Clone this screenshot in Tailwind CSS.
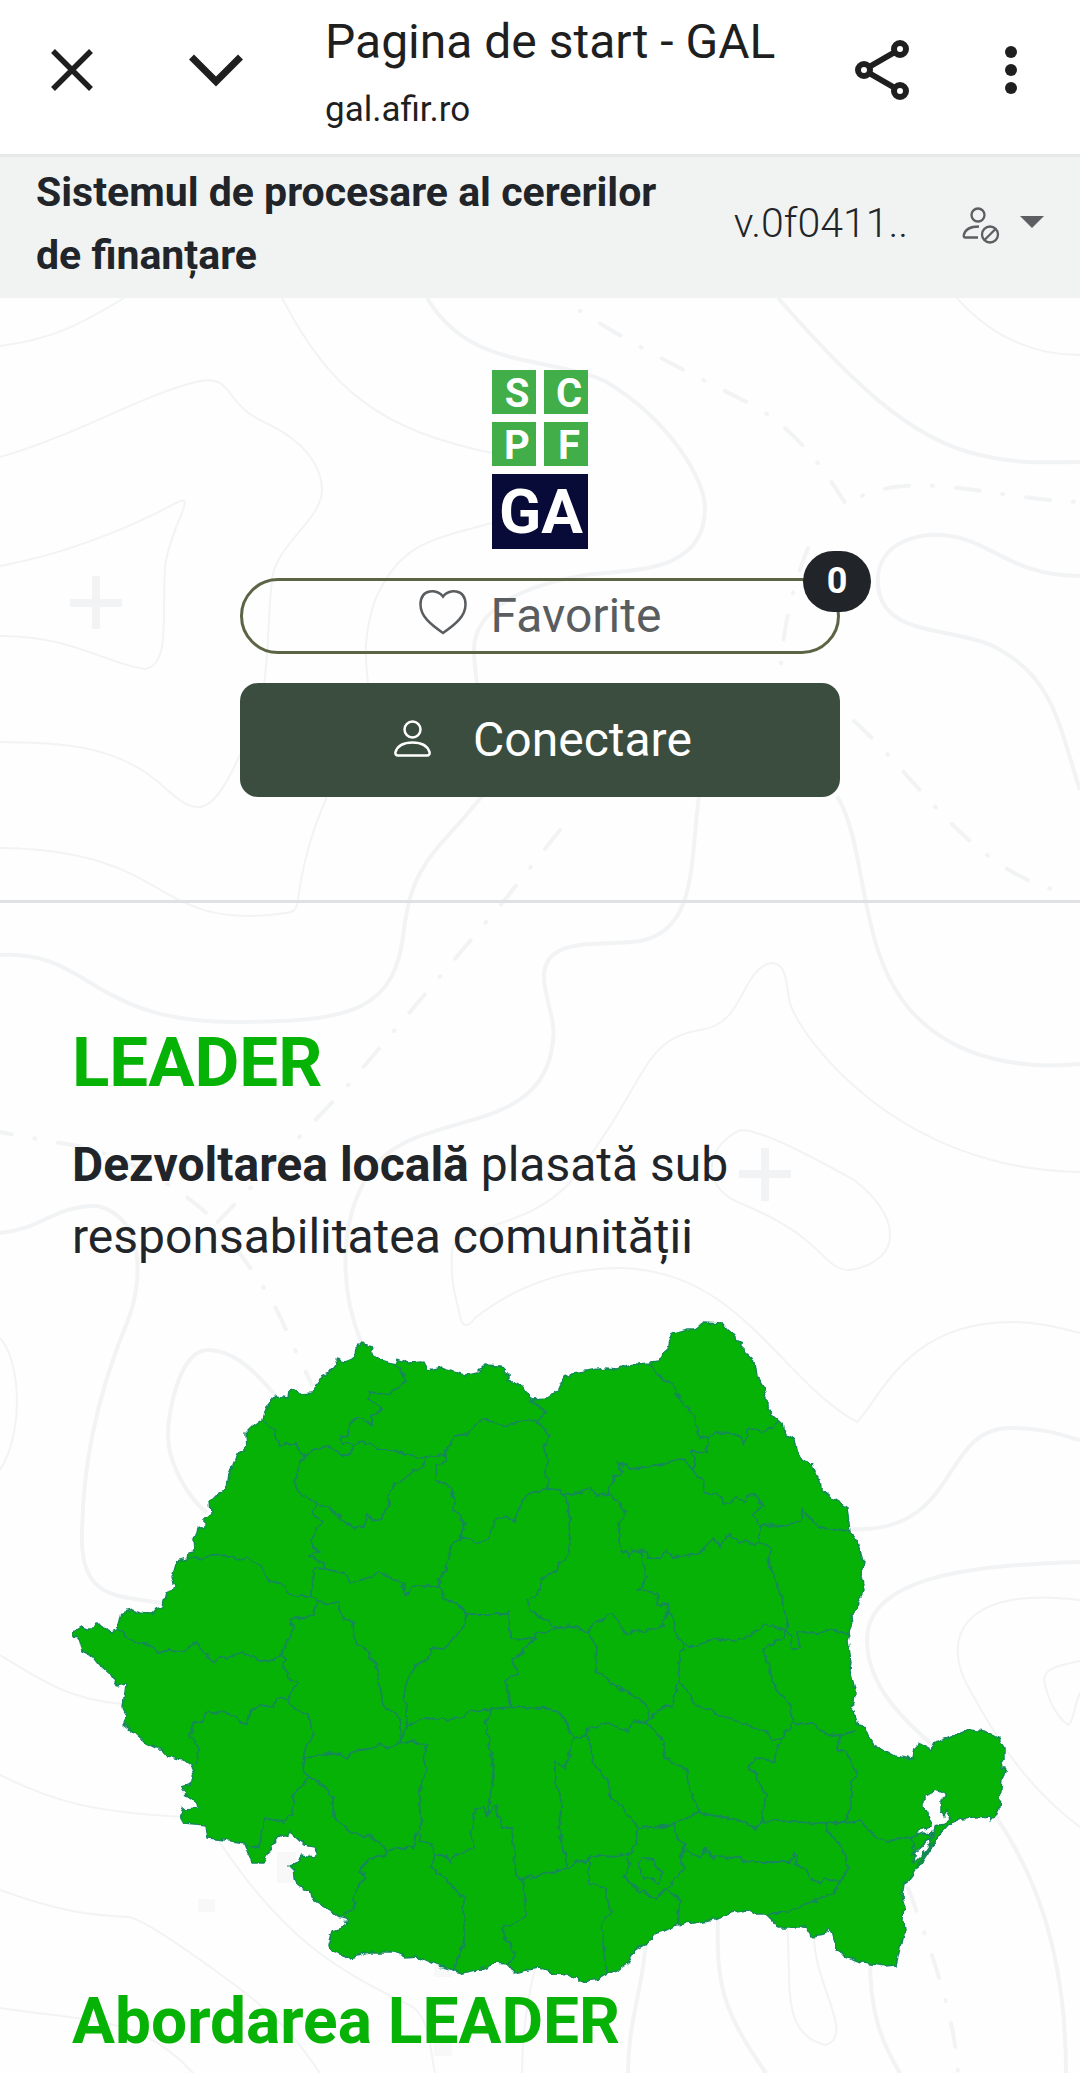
<!DOCTYPE html>
<html lang="ro">
<head>
    <meta charset="UTF-8">
    <meta name="viewport" content="width=device-width, initial-scale=1.0">
    <title>Pagina de start - GAL</title>
    <script src="https://cdn.jsdelivr.net/npm/@tailwindcss/browser@4"></script>
</head>
<body class="min-h-screen flex flex-col bg-[#fefefe] text-[#212529] font-['Roboto',sans-serif]">

    <!-- Browser bar -->
    <header class="flex items-center h-[157px] pl-[48px] pr-[27px] pb-[15px] border-b-3 border-[#e6e9e8] bg-white text-[#1f1f1f]">
        <button type="button" aria-label="Închide" class="shrink-0">
            <svg class="w-12 h-12" viewBox="0 0 48 48" fill="none" stroke="currentColor" stroke-width="5.500"><path d="M5 5 43 43M43 5 5 43"/></svg>
        </button>
        <button type="button" aria-label="Minimizează" class="shrink-0 ml-[90px]">
            <svg class="w-15 h-12" viewBox="0 0 60 48" fill="none" stroke="currentColor" stroke-width="7"><path d="M5.500 11 30 35.500 54.500 11"/></svg>
        </button>
        <div class="ml-[79px] mt-3 flex-1 min-w-0">
            <div class="text-[48px] leading-[60px] whitespace-nowrap">Pagina de start - GAL</div>
            <div class="mt-2 text-[35px] leading-[60px]">gal.afir.ro</div>
        </div>
        <button type="button" aria-label="Distribuie" class="shrink-0">
            <svg class="w-14 h-15" viewBox="0 0 56 60" fill="none" stroke="currentColor" stroke-width="6"><circle cx="10" cy="30" r="6"/><circle cx="46" cy="9" r="6"/><circle cx="46" cy="51" r="6"/><path d="M15 27 41 12M15 33 41 48"/></svg>
        </button>
        <button type="button" aria-label="Meniu" class="shrink-0 ml-[83px]">
            <svg class="w-15 h-12" viewBox="0 0 60 48" fill="currentColor"><circle cx="18" cy="6" r="6"/><circle cx="18" cy="24" r="6"/><circle cx="18" cy="42" r="6"/></svg>
        </button>
    </header>

    <!-- App bar -->
    <nav class="flex items-center h-[141px] pl-9 pr-9 pb-2 bg-[#f0f3f2]">
        <a href="#" class="flex-1 text-[41px] leading-[63px] font-bold">Sistemul de procesare al cererilor<br>de finanțare</a>
        <span class="text-[41px] leading-[63px] font-light">v.0f0411..</span>
        <button type="button" aria-label="Utilizator" class="flex items-center gap-5 ml-[54px] mt-1 text-[#5c5f62]">
            <svg class="w-[38px] h-[38px]" viewBox="0 0 38 38" fill="none" stroke="currentColor" stroke-width="2.3"><circle cx="16" cy="8" r="6.5"/><path d="M16 30.500H3.500C2 30.500 1.500 29.500 1.800 28 3 22.500 9 19.500 17 19.500"/><circle cx="28" cy="27.500" r="8"/><path d="M22.500 33 33.500 22"/></svg>
            <svg class="w-6 h-3 mb-2" viewBox="0 0 24 12" fill="currentColor"><path d="M0 0H24L12 12z"/></svg>
        </button>
    </nav>

    <main class="relative flex-1 overflow-hidden">
        <!-- Topographic background -->
        <svg class="absolute inset-0 w-full h-full" viewBox="0 298 1080 1775" preserveAspectRatio="xMidYMin slice" fill="none" stroke="#f2f3f4" aria-hidden="true">
            <g stroke-width="4">
                <path d="M427 298C470 370 545 355 605 381C670 420 705 480 705 508C705 570 640 570 592 574C520 585 474 610 474 650C474 700 500 760 482 796C440 850 412 860 404 930C395 1010 355 1022 234 1022C90 1022 90 950 0 955"/>
                <path d="M778 298C850 380 910 440 980 455C1020 465 1050 462 1080 462"/>
                <path d="M1080 576C1000 575 990 532 928 535C890 540 876 560 878 585C882 640 960 625 1000 650C1055 680 1060 730 1080 790"/>
                <path d="M699 796C690 860 698 930 640 941C600 947 543 935 544 978C545 1000 556 1020 553 1040C545 1135 430 1110 380 1160C335 1210 340 1290 361 1342"/>
                <path d="M837 796C870 850 855 960 920 1020C960 1058 1020 1070 1080 1064"/>
                <path d="M0 1233C40 1230 55 1205 98 1206C150 1220 140 1290 128 1320C95 1400 82 1470 82 1540C82 1600 120 1596 163 1603"/>
                <path d="M275 1395C250 1365 230 1350 208 1350C180 1350 168 1410 168 1436C168 1460 185 1495 207 1513"/>
                <path d="M850 1529C960 1535 940 1428 1010 1428C1050 1428 1065 1437 1080 1440"/>
                <path d="M1080 1562C960 1565 867 1580 867 1640C867 1700 930 1740 960 1770C1040 1860 1066 1960 1066 2073"/>
                <path d="M718 1915C716 1985 722 2010 766 2073M870 1960C870 2010 880 2040 900 2073M646 1940C643 1990 628 2020 628 2073"/>
            </g>
            <g stroke-width="2">
                <path d="M124 298C80 325 50 340 0 346M282 298C330 390 380 430 492 453M957 298C990 335 1030 355 1080 355"/>
                <path d="M0 457C83 433 140 395 200 381C235 375 222 405 270 425C303 441 322 465 322 490C322 520 275 545 272 580C264 650 275 690 238 759C210 820 195 815 165 788C120 745 60 742 0 742"/>
                <path d="M0 566C60 555 124 531 176 503C200 490 168 530 165 568C162 620 170 665 145 669C110 665 69 635 0 636"/>
                <path d="M492 523C430 540 400 543 375 600C362 640 366 660 368 684C360 750 310 800 298 900C296 915 290 912 269 915C150 925 170 850 0 848"/>
                <path d="M1080 1172C900 1170 800 1040 789 1000C786 970 782 963 771 963C740 970 745 1025 700 1030C640 1040 650 1080 572 1180C530 1230 455 1225 452 1250C450 1290 459 1305 460 1317C463 1330 470 1325 475 1318C510 1290 560 1268 620 1268C740 1270 780 1380 857 1422C880 1400 905 1322 1012 1322C1040 1322 1060 1328 1080 1333"/>
                <path d="M740 1130C700 1150 705 1190 740 1203C830 1240 820 1270 851 1270C905 1260 900 1215 854 1180C800 1150 760 1130 740 1130z"/>
                <path d="M0 1338C20 1360 25 1430 0 1470M0 1655C40 1680 70 1700 123 1704M0 1775C60 1805 100 1812 182 1817"/>
                <path d="M0 1890C60 1912 90 1915 128 1917C145 1917 250 1995 260 2005C290 2030 300 2045 320 2073M0 2008C90 2022 140 2015 193 2073"/>
                <path d="M217 1838C290 1950 350 1975 413 2007C430 2020 430 2050 435 2073M535 1968C525 2010 522 2040 522 2073"/>
                <path d="M787 1925C792 1985 780 2035 826 2045C855 2035 814 1985 814 1935"/>
                <path d="M1080 1600C960 1585 940 1640 970 1690C1000 1745 1030 1790 1080 1827M1080 1661C1060 1665 1044 1668 1044 1680C1048 1700 1055 1715 1068 1725C1074 1722 1074 1705 1080 1693"/>
            </g>
            <g stroke-width="4" stroke-linecap="round" stroke-dasharray="24 23 1 23">
                <path stroke-dashoffset="46" d="M579 310C640 350 689 372 758 408C800 435 825 470 847 506L862 496C920 470 1000 500 1080 502" />
                <path d="M808 548C795 580 784 620 781 665M854 721C920 780 970 870 1062 892M560 830 503 902 344 1090 213 1227"/>
                <path d="M-12 1130 83 1147C150 1165 200 1205 213 1220C250 1265 275 1300 289 1337L312 1385M908 1888C935 1960 955 2020 958 2073"/>
            </g>
            <g stroke-width="8"><path d="M96 576V629M70 603H122M765 1148V1201M739 1174H791"/></g>
            <path fill="#f8f8f9" stroke="none" d="M198 1899h17v13h-17zM277 1852h19v31h-19zM434 1960h18v17h-18zM434 2042h18v14h-18z"/>
        </svg>

        <section class="relative flex flex-col items-center pt-[72px] h-[605px] border-b-3 border-[#dfe1e5]">
            <!-- Logo -->
            <div class="grid grid-cols-2 gap-2 w-24 text-white font-bold text-center">
                <div class="h-11 pl-1.5 bg-[#41ae49] text-[40px] leading-[48px]">S</div>
                <div class="h-11 pl-1.5 bg-[#41ae49] text-[40px] leading-[48px]">C</div>
                <div class="h-11 pl-1.5 bg-[#41ae49] text-[40px] leading-[48px]">P</div>
                <div class="h-11 pl-1.5 bg-[#41ae49] text-[40px] leading-[48px]">F</div>
                <div class="col-span-2 h-[75px] pl-0.5 bg-[#080b38] text-[62px] leading-[76px]">GA</div>
            </div>

            <button type="button" class="relative mt-[29px] w-5/9 h-[76px] flex items-center justify-center gap-6 rounded-full border-3 border-[#5b6545] text-[48px] text-[#5a5d60]">
                <svg class="w-12 h-[46px] -mt-2" viewBox="0 0 48 46" fill="none" stroke="currentColor" stroke-width="2.5"><path d="M24 7.500C19 0 1.500-1 1.500 15.500C1.500 27 11 35 24 44C37 35 46.500 27 46.500 15.500C46.500-1 29 0 24 7.500z"/></svg>
                Favorite
                <span class="absolute -top-[30px] -right-[34px] w-[68px] h-[61px] rounded-full bg-[#212529] text-white text-[36px] leading-[60px] font-bold">0</span>
            </button>

            <button type="button" class="mt-[29px] w-5/9 h-[114px] pl-1.5 flex items-center justify-center gap-[42px] rounded-[18px] bg-[#3b4d3f] text-[48px] text-white">
                <svg class="w-[37px] h-[37px] -mt-1" viewBox="0 0 37 37" fill="none" stroke="currentColor" stroke-width="2.500"><circle cx="18.500" cy="9.500" r="8"/><path d="M4 35.500H33C35 35.500 36 34 35.500 32C33.500 26 27 22.500 18.500 22.500S3.500 26 1.500 32C1 34 2 35.500 4 35.500z"/></svg>
                Conectare
            </button>
        </section>

        <section class="relative px-[72px] pt-[119px]">
            <h2 class="text-[69px] leading-[82px] font-bold text-[#07b207]">LEADER</h2>
            <p class="mt-[25px] text-[48px] leading-[72px]"><b>Dezvoltarea locală</b> plasată sub<br>responsabilitatea comunității</p>

            <!-- County map -->
            <svg class="block w-full mt-[46px]" viewBox="72 1318 936 664" stroke="#15885a" stroke-linejoin="round" role="img" aria-label="Harta României">
                <defs>
                    <filter id="rough" x="-2%" y="-2%" width="104%" height="104%" color-interpolation-filters="sRGB">
                        <feTurbulence type="fractalNoise" baseFrequency="0.12" numOctaves="2" seed="4"/>
                        <feDisplacementMap in="SourceGraphic" scale="7" xChannelSelector="R" yChannelSelector="G"/>
                    </filter>
                </defs>
                <g filter="url(#rough)">
                <path fill="#07b207" fill-rule="evenodd" stroke-width="1.500" d="M72 1632 82 1626 87 1628 93 1628 96 1622 103 1626 111 1630 117 1628 119 1621 121 1612 132 1609 140 1612 152 1613 157 1607 163 1605 166 1592 173 1590 175 1585 172 1577 177 1560 187 1557 188 1551 195 1550 194 1538 198 1528 205 1525 205 1517 211 1512 210 1500 217 1493 223 1489 229 1480 230 1472 235 1460 239 1452 246 1450 245 1433 252 1426 263 1418 267 1405 276 1395 287 1397 288 1389 293 1388 300 1393 312 1392 316 1384 320 1382 319 1377 330 1372 337 1363 336 1358 345 1361 353 1358 355 1348 361 1342 371 1346 373 1353 383 1360 394 1363 396 1358 407 1362 420 1361 426 1363 428 1369 442 1366 453 1370 465 1374 478 1371 485 1364 500 1365 509 1375 509 1380 523 1386 531 1399 547 1398 557 1391 564 1376 573 1372 605 1367 618 1368 627 1364 650 1362 659 1361 662 1353 668 1348 670 1340 673 1332 687 1328 695 1328 703 1322 722 1323 727 1329 734 1332 737 1339 743 1342 743 1350 755 1361 757 1375 763 1385 767 1398 767 1405 773 1415 782 1423 786 1433 795 1438 797 1450 803 1461 813 1464 819 1480 820 1487 833 1498 847 1507 850 1530 857 1540 863 1560 861 1577 864 1588 858 1600 857 1608 851 1613 852 1625 848 1640 851 1660 850 1670 855 1690 854 1702 850 1705 854 1710 857 1723 866 1728 872 1743 894 1755 912 1758 914 1747 918 1743 931 1750 933 1743 955 1734 970 1728 985 1730 998 1737 1004 1748 1004 1760 1001 1762 1002 1767 1006 1767 1002 1780 999 1807 996 1814 990 1820 990 1816 962 1818 949 1823 938 1835 929 1850 918 1867 908 1880 903 1883 901 1893 904 1903 903 1920 904 1930 900 1947 896 1964 885 1965 863 1962 846 1955 837 1950 833 1933 830 1928 824 1933 811 1935 805 1925 800 1927 779 1927 774 1920 767 1913 755 1913 746 1909 729 1912 715 1918 692 1922 676 1924 663 1930 654 1933 646 1943 635 1950 628 1962 617 1970 607 1972 598 1977 581 1981 568 1973 554 1972 539 1967 528 1969 515 1972 508 1963 493 1962 480 1968 462 1972 450 1968 433 1963 417 1956 405 1957 393 1951 370 1951 350 1957 332 1951 328 1945 332 1930 345 1926 347 1917 338 1915 327 1907 312 1898 310 1889 300 1887 296 1880 294 1869 290 1865 298 1862 301 1854 313 1856 318 1852 313 1845 303 1843 290 1831 278 1837 272 1845 263 1862 253 1862 248 1852 244 1842 225 1839 207 1837 205 1824 185 1822 180 1813 182 1808 199 1807 198 1802 188 1795 181 1787 190 1784 192 1775 196 1769 183 1759 167 1755 162 1748 157 1748 145 1742 132 1730 123 1723 127 1715 123 1707 126 1683 117 1685 110 1673 100 1664 93 1655 82 1650 80 1642zM937 1789 946 1793 946 1797 941 1798 941 1810 944 1815 947 1810 950 1816 944 1823 936 1825 935 1832 916 1835 918 1829 931 1826 931 1820 924 1807 924 1797 929 1793zM931 1838 924 1842 916 1848 914 1862 924 1852 931 1842z"/>
                <g fill="none" stroke-width="1.800">
                    <path d="M263 1418 272 1428 280 1443 295 1443 304 1456 315 1447 332 1446 340 1453 350 1453 354 1443 362 1441 383 1448 407 1452 417 1457 427 1455 445 1453 454 1435 467 1433 481 1418 507 1425 525 1420 537 1419 547 1412 531 1399"/>
                    <path d="M354 1443 342 1443 341 1436 348 1435 349 1424 357 1416 372 1425 372 1414 382 1407 368 1398 370 1391 388 1394 407 1380 400 1368 394 1363"/>
                    <path d="M304 1456 298 1462 298 1472 294 1480 300 1493 317 1502 330 1506 335 1514 347 1521 353 1527 363 1525 367 1513 373 1520 382 1517 390 1503 388 1493 395 1482 403 1480 412 1470 423 1467 427 1455"/>
                    <path d="M317 1502 312 1512 321 1521 311 1537 318 1552 309 1555 325 1562 325 1568 315 1567 312 1583 312 1595 318 1600"/>
                    <path d="M188 1556 200 1558 210 1555 233 1554 237 1560 247 1557 260 1563 267 1579 280 1582 292 1595 312 1595M325 1568 345 1572 350 1583 380 1572 403 1582 403 1592 410 1592 412 1585 440 1586"/>
                    <path d="M445 1453 445 1460 437 1463 436 1477 450 1487 455 1497 454 1510 465 1522 462 1536 450 1545 449 1560 440 1577 440 1586 445 1598 457 1603 466 1615 463 1627 443 1648 430 1647 428 1658 417 1663 408 1678 403 1693 407 1710 407 1725 402 1740"/>
                    <path d="M117 1628 137 1642 152 1644 158 1652 167 1650 183 1651 196 1640 200 1647 212 1661 223 1657 243 1651 260 1660 273 1659 280 1653"/>
                    <path d="M318 1600 311 1615 290 1618 293 1628 287 1643 280 1653 286 1658 283 1667 292 1680 297 1682 288 1697 295 1709 307 1712 314 1732 304 1750 304 1757"/>
                    <path d="M318 1600 337 1603 342 1615 352 1622 353 1640 365 1647 375 1663 378 1680 383 1705 400 1718 402 1740"/>
                    <path d="M196 1763 199 1750 190 1734 193 1722 202 1720 207 1710 237 1715 240 1722 248 1722 250 1710 261 1703 273 1707 277 1698 288 1697"/>
                    <path d="M304 1757 327 1752 340 1753 347 1758 353 1750 368 1748 380 1743 388 1748 402 1740 417 1742 427 1745 423 1757 427 1768 419 1792 421 1830"/>
                    <path d="M304 1757 302 1768 310 1776 325 1785 333 1795 333 1815 352 1832 370 1835 388 1850M310 1776 294 1793 292 1812 284 1822 267 1817 262 1825 260 1847 244 1843"/>
                    <path d="M388 1850 397 1847 413 1847 417 1830 421 1840 432 1843 435 1855 445 1855 450 1861 458 1852 474 1848 471 1832 475 1808 483 1805 488 1815 496 1805 503 1827 512 1827 516 1875 523 1877 548 1872 568 1868"/>
                    <path d="M388 1850 385 1855 370 1857 360 1870 366 1877 355 1887 353 1908 342 1914M435 1855 431 1865 447 1880 464 1898 464 1943 455 1962 454 1970"/>
                    <path d="M492 1709 486 1722 492 1760 493 1772 488 1815M523 1875 526 1915 501 1928 515 1953 508 1963"/>
                    <path d="M407 1725 425 1717 453 1719 473 1710 510 1706 548 1707 565 1718 572 1737 568 1760 565 1767 555 1760 555 1783 561 1793 559 1827 568 1868"/>
                    <path d="M510 1706 506 1680 519 1672 512 1660 522 1650 535 1638 536 1633 558 1627M463 1627 467 1613 507 1613 509 1610 510 1637 535 1638M457 1603 467 1613"/>
                    <path d="M450 1545 462 1535 475 1542 487 1539 495 1520 505 1515 514 1520 522 1500 530 1492 548 1488 560 1489 565 1493 580 1492 588 1487 597 1494 608 1493"/>
                    <path d="M537 1419 549 1435 543 1445 548 1460 546 1470 548 1488M565 1493 569 1513 570 1552 557 1567 542 1578 538 1593 527 1597 530 1610 558 1627 573 1625 587 1632"/>
                    <path d="M650 1363 660 1376 672 1383 680 1398 694 1413 699 1438 708 1437 707 1453 690 1450 697 1463 692 1468M708 1437 715 1431 738 1434 744 1442 749 1427 763 1430 780 1422"/>
                    <path d="M692 1468 681 1457 663 1464 630 1468 618 1460 623 1470 613 1477 608 1493 617 1500 626 1512 618 1522 621 1547 630 1556 632 1549 647 1550 648 1557 660 1557 667 1549 673 1557 698 1553 713 1538 720 1545 728 1532 737 1541 760 1542"/>
                    <path d="M692 1468 702 1480 704 1493 717 1493 725 1502 738 1497 743 1500 746 1495 756 1494 763 1505 752 1513 760 1524 760 1542 770 1548 767 1560 780 1587 788 1628"/>
                    <path d="M760 1524 783 1525 802 1520 803 1508 813 1522 832 1530 850 1529"/>
                    <path d="M640 1550 647 1577 639 1588 658 1593 657 1605 668 1603 667 1613 663 1625 643 1630 625 1632 612 1611 593 1623 587 1632 597 1645 596 1662 597 1670 611 1682 639 1697 650 1710 647 1722"/>
                    <path d="M667 1613 673 1617 677 1635 684 1643 678 1663 679 1680 672 1705 661 1707 650 1719M684 1643 695 1645 713 1638 733 1640 752 1633 765 1622 788 1630 793 1647 799 1647 798 1630 817 1633 827 1628 850 1633"/>
                    <path d="M788 1630 782 1637 763 1648 773 1680 777 1690 790 1703 793 1722M679 1680 694 1702 722 1715 744 1723 765 1730 772 1738 781 1737"/>
                    <path d="M793 1722 781 1737 774 1760 755 1757 748 1767 757 1775 766 1793 761 1823M793 1722 814 1723 826 1733 840 1734 857 1730M840 1734 839 1748 850 1757 857 1772 851 1783 851 1807 844 1822"/>
                    <path d="M585 1728 607 1722 628 1730 633 1719 647 1722 663 1740 665 1757 685 1767 690 1790 700 1812"/>
                    <path d="M572 1737 585 1735 587 1728 589 1743 595 1763 609 1783 610 1796 620 1803 638 1827 637 1843 628 1855 592 1854 588 1860 578 1859 568 1868"/>
                    <path d="M638 1827 663 1825 674 1823 700 1812 733 1818 755 1827 761 1823 772 1819 781 1821 844 1822 861 1820 870 1832 887 1840 911 1837"/>
                    <path d="M674 1823 678 1837 684 1843 681 1860 685 1867 666 1888 655 1897 639 1890 624 1875 631 1863 628 1855M644 1857 654 1858 655 1866 664 1870 658 1883 639 1872 639 1862z"/>
                    <path d="M685 1850 700 1857 706 1847 711 1856 740 1857 748 1861 790 1861 795 1852 797 1863 818 1882 826 1878 840 1881"/>
                    <path d="M826 1822 827 1830 840 1842 849 1868 840 1881 833 1893 811 1901 785 1912 767 1912M666 1888 681 1900 676 1923M588 1860 589 1883 605 1887 610 1910 602 1923 607 1972"/>
                    <path d="M911 1837 922 1832 934 1834 924 1842 912 1856M911 1837 914 1850M935 1840 926 1852 916 1866"/>
                </g>
                </g>
            </svg>

            <h2 class="text-[64px] leading-[78px] font-bold text-[#07b207]">Abordarea LEADER</h2>
        </section>
    </main>
</body>
</html>
